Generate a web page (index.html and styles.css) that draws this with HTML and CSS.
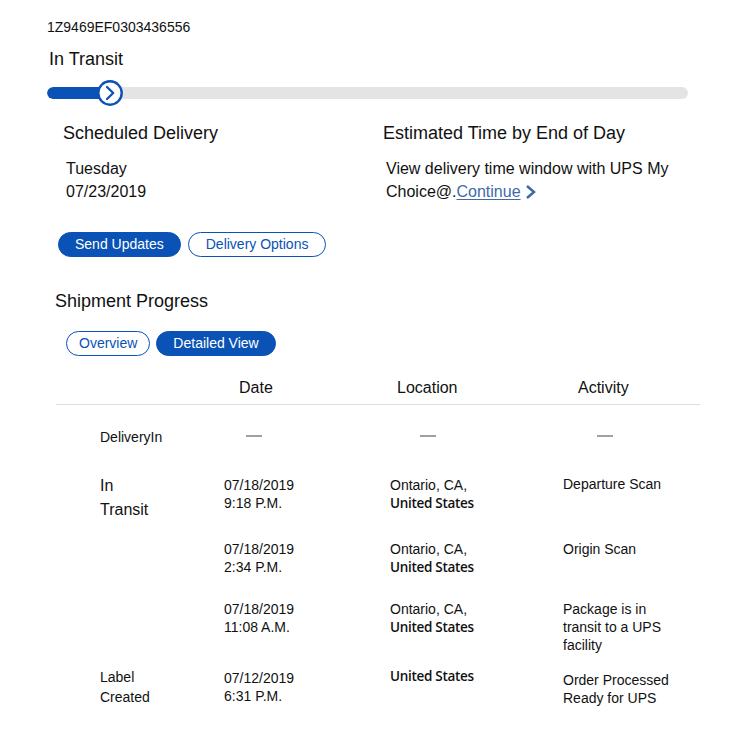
FILE: index.html
```html
<!DOCTYPE html>
<html lang="en">
<head>
<meta charset="utf-8">
<title>Tracking 1Z9469EF0303436556</title>
<link rel="stylesheet" href="styles.css">
</head>
<body>
<main class="page">
  <div class="tracking-no">1Z9469EF0303436556</div>
  <h1 class="status">In Transit</h1>
  <div class="progress">
    <div class="track">
      <div class="fill" style="width: 63px"></div>
    </div>
    <span class="marker">
      <svg width="26" height="26" viewBox="0 0 26 26" aria-hidden="true">
        <circle cx="13" cy="13" r="11.7" fill="#fff" stroke="#0a52b5" stroke-width="2.4"/>
        <path d="M10 7 L16.2 13 L10 19" fill="none" stroke="#0a52b5" stroke-width="2.3" stroke-linecap="round" stroke-linejoin="round"/>
      </svg>
    </span>
  </div>

  <section class="delivery">
    <div class="col">
      <h2 class="heading">Scheduled Delivery</h2>
      <p class="body-text">Tuesday<br>07/23/2019</p>
    </div>
    <div class="col">
      <h2 class="heading">Estimated Time by End of Day</h2>
      <p class="body-text">View delivery time window with UPS My<br>Choice@.<a class="link" href="#">Continue</a><svg class="chev" width="13" height="16" viewBox="0 0 13 16" aria-hidden="true"><path d="M3 2 L10 8 L3 14" fill="none" stroke="#3f6aa8" stroke-width="2.5"/></svg></p>
    </div>
  </section>

  <div class="actions">
    <button class="pill pill-solid pill-send">Send Updates</button>
    <button class="pill pill-outline pill-options">Delivery Options</button>
  </div>

  <h2 class="heading section-title">Shipment Progress</h2>
  <div class="tabs">
    <button class="pill pill-outline pill-overview">Overview</button>
    <button class="pill pill-solid pill-detailed">Detailed View</button>
  </div>

  <div class="table">
    <div class="thead">
      <div></div>
      <div class="th th-date">Date</div>
      <div class="th th-loc">Location</div>
      <div class="th th-act">Activity</div>
    </div>

    <div class="row row-empty">
      <div class="label small">DeliveryIn</div>
      <div><span class="dash dash-date"></span></div>
      <div><span class="dash dash-loc"></span></div>
      <div><span class="dash dash-act"></span></div>
    </div>

    <div class="row row-transit">
      <div class="label big">In<br>Transit</div>
      <div class="cell">07/18/2019<br>9:18 P.M.</div>
      <div class="cell">Ontario, CA,<br><strong class="country">United States</strong></div>
      <div class="cell">Departure Scan</div>
    </div>

    <div class="row">
      <div class="label"></div>
      <div class="cell">07/18/2019<br>2:34 P.M.</div>
      <div class="cell">Ontario, CA,<br><strong class="country">United States</strong></div>
      <div class="cell">Origin Scan</div>
    </div>

    <div class="row row-long">
      <div class="label"></div>
      <div class="cell">07/18/2019<br>11:08 A.M.</div>
      <div class="cell">Ontario, CA,<br><strong class="country">United States</strong></div>
      <div class="cell">Package is in<br>transit to a UPS<br>facility</div>
    </div>

    <div class="row row-last">
      <div class="label mid">Label<br>Created</div>
      <div class="cell">07/12/2019<br>6:31 P.M.</div>
      <div class="cell cell-up"><strong class="country">United States</strong></div>
      <div class="cell cell-down">Order Processed<br>Ready for UPS</div>
    </div>
  </div>
</main>
</body>
</html>
```

FILE: styles.css
```css
* { box-sizing: border-box; }

html, body {
  margin: 0;
  padding: 0;
  background: #ffffff;
}

body {
  font-family: "Liberation Sans", Arial, sans-serif;
  color: #111111;
}

.page {
  padding: 19px 0 0 47px;
  width: 750px;
}

.tracking-no {
  font-size: 14px;
  line-height: 16px;
}

.status {
  margin: 13px 0 0 2px;
  font-size: 18px;
  line-height: 22px;
  font-weight: normal;
}

.progress {
  position: relative;
  margin-top: 10px;
  width: 641px;
  height: 26px;
  display: flex;
  align-items: center;
}

.track {
  width: 100%;
  height: 12px;
  border-radius: 6px;
  background: #e4e4e4;
  overflow: hidden;
}

.fill {
  height: 100%;
  background: #0a52b5;
  border-radius: 6px 0 0 6px;
}

.marker {
  position: absolute;
  left: 50px;
  top: 0;
  width: 26px;
  height: 26px;
  display: block;
}

.marker svg { display: block; }

.delivery {
  display: grid;
  grid-template-columns: 320px 1fr;
  margin: 16px 0 0 16px;
}

.heading {
  margin: 0;
  font-size: 18px;
  line-height: 22px;
  font-weight: normal;
}

.body-text {
  margin: 13px 0 0 3px;
  font-size: 16px;
  line-height: 23px;
}

.link {
  color: #3f6aa8;
  text-decoration: underline;
  text-underline-offset: 2px;
}

.chev {
  margin-left: 3px;
  vertical-align: -3px;
}

.actions {
  display: flex;
  gap: 7px;
  margin: 29px 0 0 11px;
}

.pill {
  font-family: "Liberation Sans", Arial, sans-serif;
  font-size: 14px;
  line-height: 23px;
  height: 25px;
  border-radius: 13px;
  border: 1px solid #0a52b5;
  padding: 0 16px;
  cursor: pointer;
  white-space: nowrap;
}

.pill-solid {
  background: #0a52b5;
  color: #ffffff;
}

.pill-outline {
  background: #ffffff;
  color: #0a52b5;
}

.pill-send { padding: 0 16px; }
.pill-options { padding: 0 17px; }
.pill-overview { padding: 0 12px; }
.pill-detailed { padding: 0 16px; }

.section-title {
  margin: 33px 0 0 8px;
}

.tabs {
  display: flex;
  gap: 6px;
  margin: 19px 0 0 19px;
}

.table {
  margin: 22px 0 0 9px;
  width: 644px;
}

.thead,
.row {
  display: grid;
  grid-template-columns: 168px 166px 173px 1fr;
  align-items: start;
}

.thead {
  border-bottom: 1px solid #dddddd;
  padding-bottom: 6px;
}

.th {
  font-size: 16px;
  line-height: 20px;
}

.th-date { padding-left: 15px; }
.th-loc { padding-left: 7px; }
.th-act { padding-left: 15px; }

.row {
  min-height: 60px;
  font-size: 14px;
  line-height: 18px;
}

.row-empty {
  min-height: 0;
  padding: 23px 0 28px;
}

.row-transit { min-height: 66px; }
.row-long { min-height: 69px; }
.row-last { min-height: 60px; }

.label {
  padding-left: 44px;
}

.label.small {
  font-size: 14px;
  line-height: 18px;
}

.label.big {
  font-size: 16px;
  line-height: 24px;
}

.label.mid {
  font-size: 14px;
  line-height: 20px;
  margin-top: -2px;
}

.row-transit .cell { padding-top: 2px; }
.row-transit .cell:last-child { padding-top: 1px; }

.cell-up { margin-top: -2px; }
.cell-down { margin-top: 2px; }

.country {
  font-family: "Open Sans", "Liberation Sans", sans-serif;
  font-weight: 600;
  font-size: 13.5px;
  letter-spacing: -0.3px;
  vertical-align: 1px;
}

.dash {
  display: block;
  width: 16px;
  height: 2px;
  background: #a0a0a0;
  margin-top: 7px;
}

.dash-date { margin-left: 22px; }
.dash-loc { margin-left: 30px; }
.dash-act { margin-left: 34px; }
```
